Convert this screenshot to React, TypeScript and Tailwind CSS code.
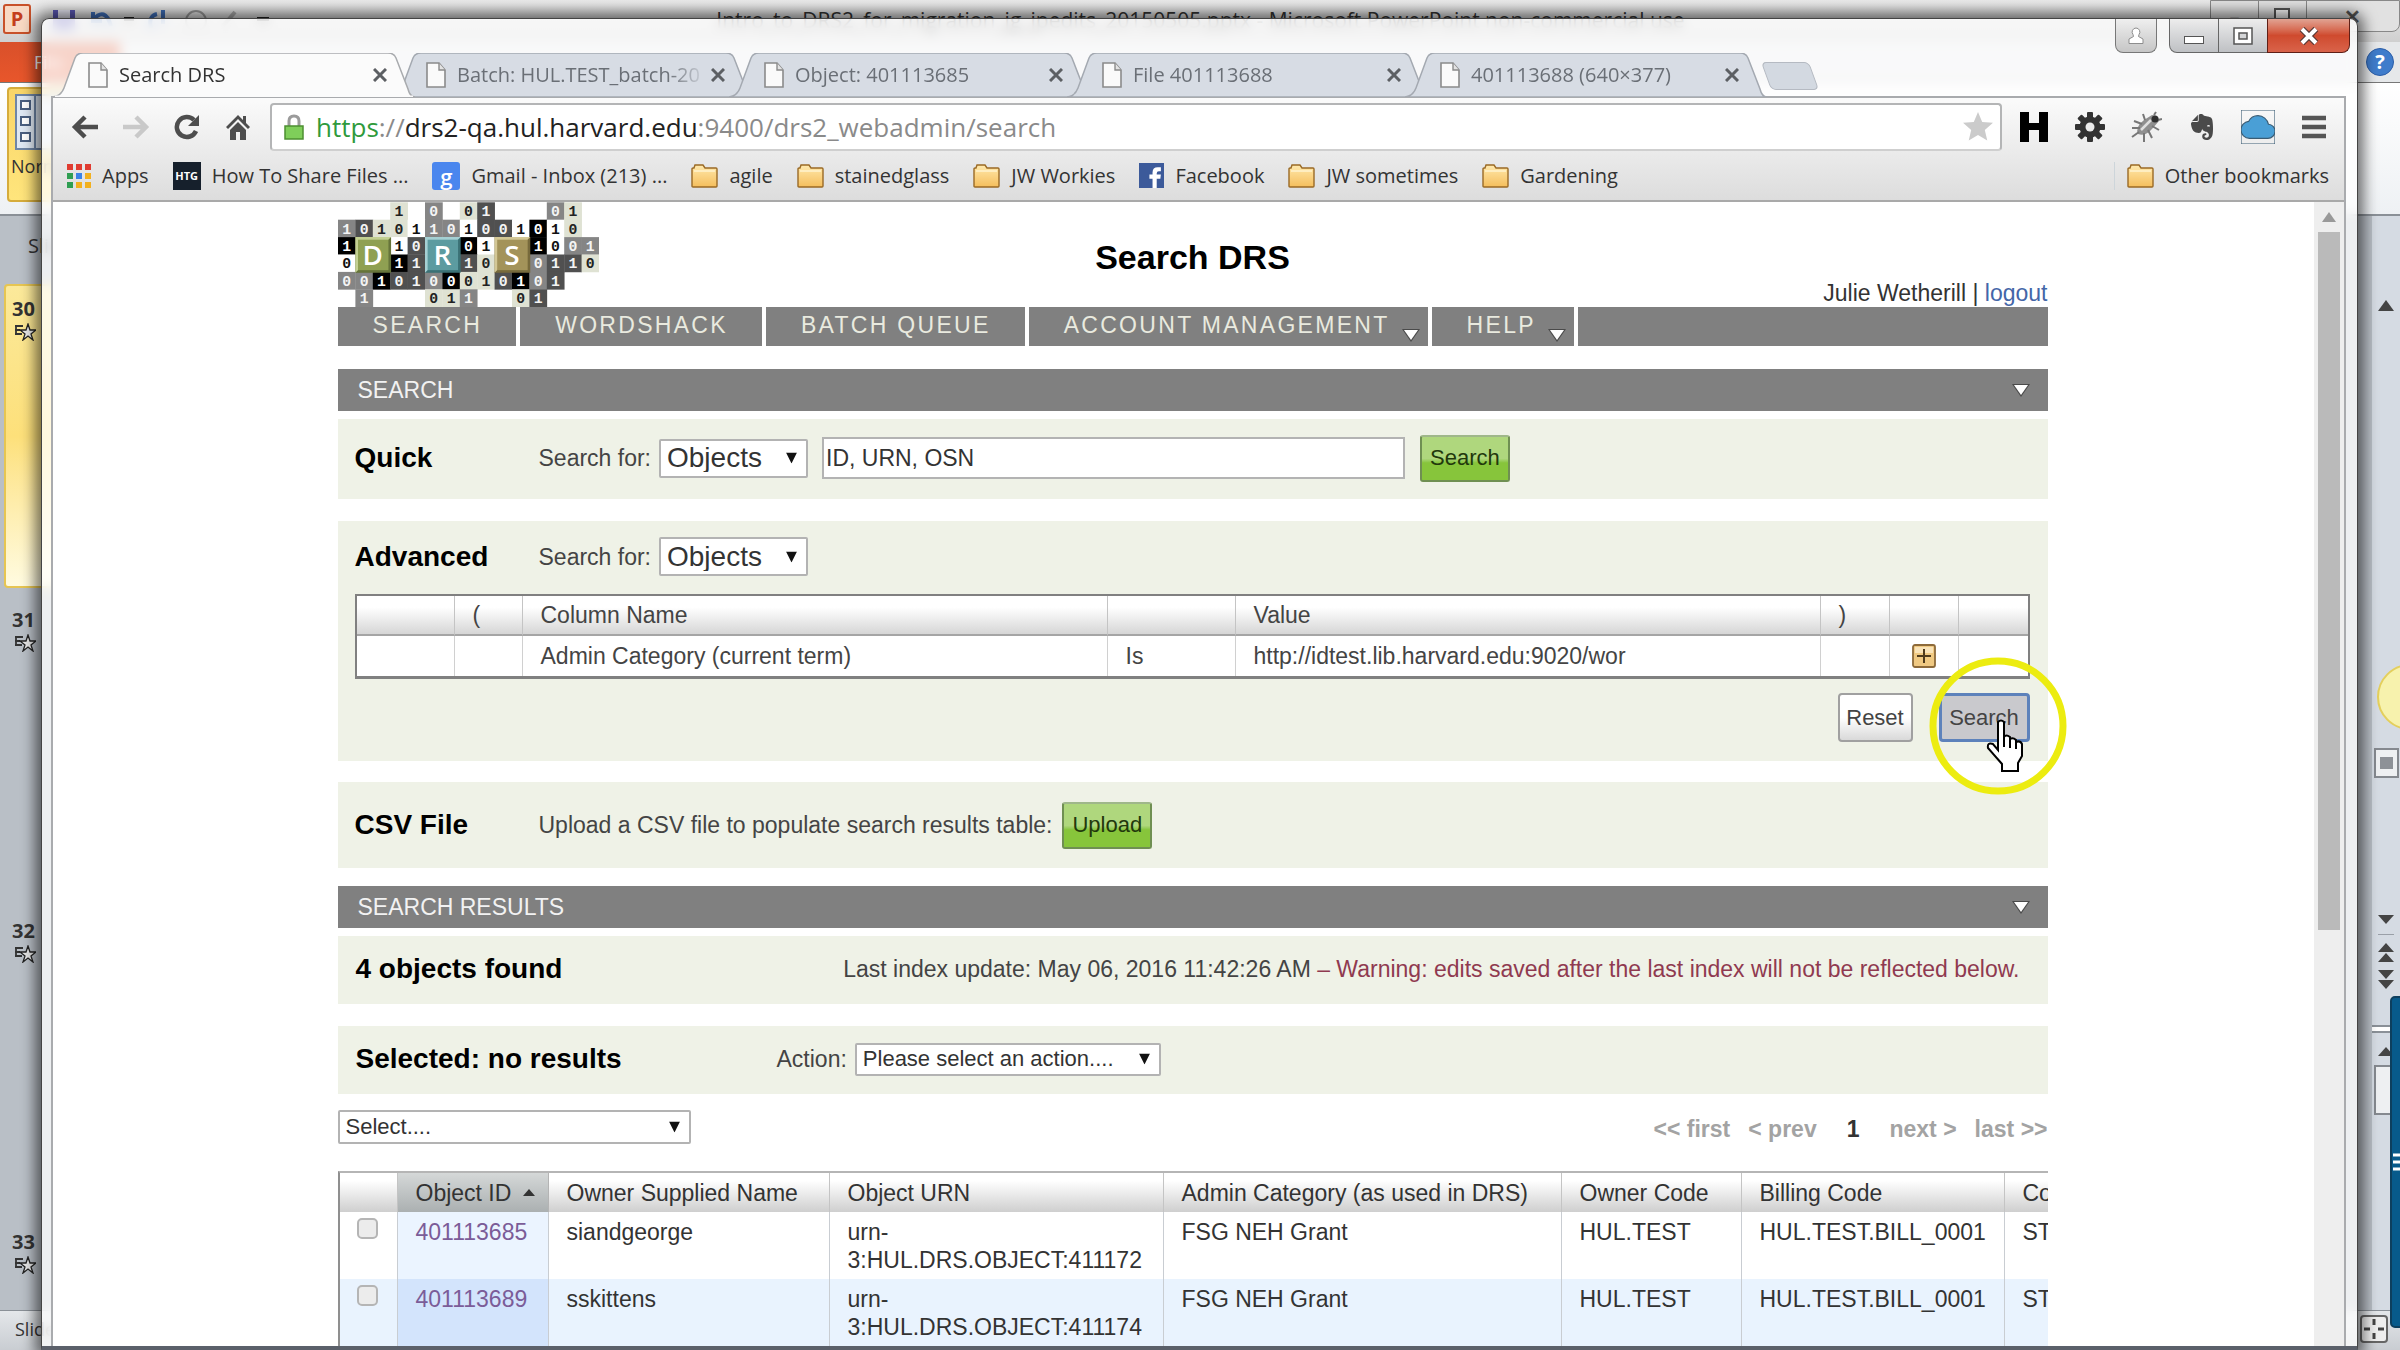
import React, { FunctionComponent, ReactNode } from "react";
import { SiEvernote } from "react-icons/si";
import { MdCloud, MdStar } from "react-icons/md";

/* ---------- small drawings ---------- */

const PageIcon = () => (
  <svg className="h-[26px] w-5 shrink-0" viewBox="0 0 20 26">
    <path d="M1 1h12l6 7v17H1z" fill="#fafafa" stroke="#8b8b8b" strokeWidth="1.6" />
    <path d="M13 1v7h6" fill="#e3e3e3" stroke="#8b8b8b" strokeWidth="1.4" />
  </svg>
);

const FolderIcon = () => (
  <svg className="h-6 w-[27px] shrink-0" viewBox="0 0 27 24">
    <defs>
      <linearGradient id="folder" x1="0" y1="0" x2="0" y2="1">
        <stop offset="0" stopColor="#ffe9ad" />
        <stop offset="1" stopColor="#f5be5c" />
      </linearGradient>
    </defs>
    <path
      d="M1 22V5q0-1 1-1h1l1-3h8l2 3h11q1 0 1 1v17q0 1-1 1H2q-1 0-1-1z"
      fill="url(#folder)"
      stroke="#9a6a25"
      strokeWidth="1.4"
    />
    <path d="M3 7h21" stroke="#fff3cf" strokeWidth="1.5" />
  </svg>
);

const AppsIcon = () => (
  <svg className="h-6 w-6 shrink-0" viewBox="0 0 24 24">
    {["#e03c31", "#e03c31", "#e03c31", "#2f9e52", "#3b82e6", "#f2b01e", "#2f9e52", "#f2b01e", "#f2b01e"].map(
      (c, i) => (
        <rect key={i} x={(i % 3) * 9} y={Math.floor(i / 3) * 9} width="6" height="6" fill={c} />
      )
    )}
  </svg>
);

const DownArrow = ({ className = "" }: { className?: string }) => (
  <svg className={`h-[11px] w-[11px] ${className}`} viewBox="0 0 10 10">
    <path d="M0 0h10L5 10z" fill="currentColor" />
  </svg>
);

const WhiteArrow = ({ className = "" }: { className?: string }) => (
  <svg className={`h-[14px] w-[18px] ${className}`} viewBox="0 0 18 14">
    <path d="M0 1h18L9 14z" fill="#4a4a4a" />
    <path d="M2 2h14L9 12z" fill="#fff" />
  </svg>
);

/* ---------- logo ---------- */

// one letter per cell: shade, then the digit
const LOGO_ROWS = [
  ".. .. .. l1 .. g0 .. l0 d1 .. .. .. g0 l1 ..",
  "g1 d0 l1 l0 w1 g1 g0 w1 d0 d0 w1 k0 w1 l0 ..",
  "k1 .. .. w1 d0 .. .. k0 w1 .. .. k1 w0 g0 g1",
  "w0 .. .. k1 d1 .. .. d1 l0 .. .. g0 d1 d1 l0",
  "g0 g0 k1 d0 d1 g0 k0 l0 l1 d0 k1 g0 d1 .. ..",
  ".. g1 .. .. .. l0 l1 g1 .. .. l0 d1 .. .. ..",
];

const SHADES: Record<string, [string, string]> = {
  l: ["#dfe2d3", "#222"],
  g: ["#858585", "#f4f4f4"],
  d: ["#505050", "#f4f4f4"],
  w: ["#ffffff", "#111"],
  k: ["#000000", "#fff"],
};

const LOGO_TILES = [
  { letter: "D", col: 1, fill: "#8fa052", light: "#c3d092", dark: "#66743a" },
  { letter: "R", col: 5, fill: "#5c9ba0", light: "#a5d0d3", dark: "#3b7175" },
  { letter: "S", col: 9, fill: "#a3935a", light: "#d3c795", dark: "#776a3c" },
];

const Logo = () => (
  <svg className="h-[105px] w-[261px]" viewBox="0 0 150 60" role="img" aria-label="DRS">
    {LOGO_ROWS.map((row, y) =>
      row.split(" ").map((cell, x) => {
        if (cell === "..") return null;
        const [bg, fg] = SHADES[cell[0]];
        return (
          <g key={`${x}-${y}`}>
            <rect x={x * 10} y={y * 10} width="10.2" height="10.2" fill={bg} />
            <text
              x={x * 10 + 5}
              y={y * 10 + 8}
              textAnchor="middle"
              fontSize="8.5"
              fontWeight="700"
              fontFamily="Liberation Mono, monospace"
              fill={fg}
            >
              {cell[1]}
            </text>
          </g>
        );
      })
    )}
    {LOGO_TILES.map(({ letter, col, fill, light, dark }) => (
      <g key={letter}>
        <rect x={col * 10} y="20" width="20.5" height="20.5" fill={dark} />
        <path d={`M${col * 10} 20h20.5l-2 2h-16.500v16.500l-2 2z`} fill={light} />
        <rect x={col * 10 + 1.5} y="21.5" width="17.5" height="17.5" fill={fill} />
        <text
          x={col * 10 + 10}
          y="36"
          textAnchor="middle"
          fontSize="16"
          fontWeight="600"
          fontFamily="Open Sans, sans-serif"
          fill="#fff"
        >
          {letter}
        </text>
      </g>
    ))}
  </svg>
);

/* ---------- browser ---------- */

interface ITab {
  title: string;
  active?: boolean;
}

const TABS: ITab[] = [
  { title: "Search DRS", active: true },
  { title: "Batch: HUL.TEST_batch-20" },
  { title: "Object: 401113685" },
  { title: "File 401113688" },
  { title: "401113688 (640×377)" },
];

const Tab: FunctionComponent<ITab> = ({ title, active }) => (
  <div
    className={`relative -mr-6 flex w-[362px] items-center pr-7 pl-[35px] ${
      active ? "z-10 text-[#333]" : "text-[#6a6f76]"
    }`}
  >
    <svg className="absolute inset-0 h-full w-full" viewBox="0 0 362 44" preserveAspectRatio="none">
      <path
        d="M0 44q8-1 11-9L22 5q2-5 8-5h305q6 0 8 5l12 31q2 8 7 8z"
        fill={active ? "#fbfbfb" : "#d7dce4"}
        stroke={active ? "#a9abae" : "#a4a9b1"}
        strokeWidth="1.5"
      />
      {active && <path d="M2 44h358" stroke="#fbfbfb" strokeWidth="3" />}
    </svg>
    <div className="relative flex min-w-0 flex-1 items-center gap-[11px]">
      <PageIcon />
      <a
        href="#"
        className="w-[250px] overflow-hidden whitespace-nowrap [mask-image:linear-gradient(to_right,black_84%,transparent)]"
      >
        {title}
      </a>
    </div>
    <button aria-label={`Close ${title}`} className="relative">
      <svg className="h-[14px] w-[14px]" viewBox="0 0 14 14">
        <path d="M1 1l12 12M13 1L1 13" stroke="#5c5f63" strokeWidth="3" />
      </svg>
    </button>
  </div>
);

const WindowButtons = () => (
  <div className="-mr-1 flex h-[34px] items-stretch">
    <button
      aria-label="Profile"
      className="mr-3 flex w-[42px] items-center justify-center rounded-b-lg border border-t-0 border-[#777] bg-linear-to-b from-[#efefef] to-[#c6c6c6]"
    >
      <svg className="h-[18px] w-[18px]" viewBox="0 0 18 18">
        <path
          d="M9 1a4 4 0 0 1 3 6.500l-.5 2 4.500 2.500v4.500H2V12l4.500-2.500-.5-2A4 4 0 0 1 9 1z"
          fill="#fff"
          stroke="#8d8d8d"
        />
      </svg>
    </button>
    <button
      aria-label="Minimize"
      className="flex w-[50px] items-center justify-center rounded-bl-lg border border-t-0 border-[#666] bg-linear-to-b from-[#ededed] via-[#d5d6d8] to-[#bfc1c4]"
    >
      <span className="mt-2 h-2 w-5 border border-[#555] bg-white" />
    </button>
    <button
      aria-label="Restore"
      className="flex w-[48px] items-center justify-center border-b border-[#666] bg-linear-to-b from-[#ededed] via-[#d5d6d8] to-[#bfc1c4]"
    >
      <svg className="h-[18px] w-5" viewBox="0 0 20 18">
        <rect x="1" y="1" width="18" height="16" fill="#fff" stroke="#555" strokeWidth="1.5" />
        <rect x="6" y="6" width="8" height="6" fill="#d5d6d8" stroke="#555" strokeWidth="1.5" />
      </svg>
    </button>
    <button
      aria-label="Close window"
      className="flex w-[83px] items-center justify-center rounded-br-lg border border-t-0 border-[#5f1f16] bg-linear-to-b from-[#e0a393] via-[#cf4a2e] to-[#d9634a]"
    >
      <svg className="h-[18px] w-[20px]" viewBox="0 0 20 18">
        <path d="M3 2l14 14M17 2L3 16" stroke="#5a3a36" strokeWidth="6.5" />
        <path d="M3 2l14 14M17 2L3 16" stroke="#fff" strokeWidth="4" />
      </svg>
    </button>
  </div>
);

const ToolButton = ({ label, children }: { label: string; children: ReactNode }) => (
  <button aria-label={label} className="flex w-8 shrink-0 items-center justify-center">
    {children}
  </button>
);

const Toolbar = () => (
  <div className="flex items-center pt-[5px] pr-[14px] pl-4">
    <div className="flex gap-[19px]">
      <ToolButton label="Back">
        <svg className="h-6 w-7" viewBox="0 0 28 24">
          <path d="M27 12H5M14 2L4 12l10 10" fill="none" stroke="#4d4d4d" strokeWidth="4.5" />
        </svg>
      </ToolButton>
      <ToolButton label="Forward">
        <svg className="h-6 w-7" viewBox="0 0 28 24">
          <path d="M1 12h22M14 2l10 10-10 10" fill="none" stroke="#c9c9c9" strokeWidth="4.5" />
        </svg>
      </ToolButton>
      <ToolButton label="Reload">
        <svg className="h-[26px] w-7" viewBox="0 0 28 26">
          <path d="M23 17a10 10 0 1 1-2-11" fill="none" stroke="#4d4d4d" strokeWidth="4.5" />
          <path d="M26 1v11H15z" fill="#4d4d4d" />
        </svg>
      </ToolButton>
      <ToolButton label="Home">
        <svg className="h-[26px] w-6" viewBox="0 0 24 26">
          <path d="M12 1L0 13l2 2L12 5l10 10 2-2-4-4V2h-3v4z" fill="#4d4d4d" />
          <path d="M12 8l-8 8v10h6v-8h4v8h6V16z" fill="#4d4d4d" />
        </svg>
      </ToolButton>
    </div>

    <div className="ml-4 flex h-12 flex-1 items-center rounded-[4px] border-2 border-[#b4b5b6] border-b-[#cfcfcf] bg-white px-3">
      <svg className="mr-3 h-[26px] w-5 shrink-0" viewBox="0 0 20 26">
        <path d="M5 13V7q0-5 5-5t5 5v6" fill="none" stroke="#9b9b9b" strokeWidth="3" />
        <rect x="1" y="12" width="18" height="13" fill="#7fce5a" stroke="#4c8f31" strokeWidth="1.5" />
      </svg>
      <div className="flex-1 text-[26px] leading-8 text-[#8a8a8a]">
        <span className="text-[#2f9a3c]">https</span>://<span className="text-[#222]">drs2-qa.hul.harvard.edu</span>
        :9400/drs2_webadmin/search
      </div>
      <MdStar className="-mr-2 h-9 w-9 text-[#cbcbcb]" />
    </div>

    <div className="ml-4 flex gap-6">
      <ToolButton label="H extension">
        <svg className="h-[30px] w-7" viewBox="0 0 28 30">
          <path d="M0 0h9v11h10V0h9v30h-9V18H9v12H0z" fill="#000" />
        </svg>
      </ToolButton>
      <ToolButton label="Settings">
        <svg className="h-[30px] w-[30px]" viewBox="0 0 30 30">
          {[0, 45, 90, 135].map((a) => (
            <rect key={a} x="12" y="0" width="6" height="30" rx="1" fill="#333" transform={`rotate(${a} 15 15)`} />
          ))}
          <circle cx="15" cy="15" r="10.5" fill="#333" />
          <circle cx="15" cy="15" r="4.5" fill="#ececec" />
        </svg>
      </ToolButton>
      <ToolButton label="Bug">
        <svg className="h-8 w-8" viewBox="0 0 32 32">
          <path d="M8 23Q5 16 14 9l8-5q7 0 7 6l-7 8q-7 8-14 5z" fill="#8f8f8f" />
          <path
            d="M12 13L4 10M10 17H2M9 21l-7 5M14 22v9M18 19l4 8M22 15l7 4M15 9l-2-6M24 4l2-3M28 9l4-1"
            stroke="#777"
            strokeWidth="2"
          />
          <path d="M11 19l10-10" stroke="#dedede" strokeWidth="2.5" />
          <circle cx="25" cy="8" r="3.5" fill="#2f2f2f" />
        </svg>
      </ToolButton>
      <ToolButton label="Evernote">
        <SiEvernote className="h-[26px] w-[26px] text-[#4a4a4a]" />
      </ToolButton>
      <ToolButton label="Cloud">
        <MdCloud className="h-[34px] w-[34px] shrink-0 text-[#4a9fd6]" stroke="#3a5c74" strokeWidth="0.8" />
      </ToolButton>
      <ToolButton label="Menu">
        <svg className="h-6 w-6" viewBox="0 0 24 24">
          <path d="M0 3h24M0 12h24M0 21h24" stroke="#555" strokeWidth="4.5" />
        </svg>
      </ToolButton>
    </div>
  </div>
);

interface IBookmark {
  text: string;
  icon?: ReactNode;
}

const BOOKMARKS: IBookmark[] = [
  { text: "Apps", icon: <AppsIcon /> },
  {
    text: "How To Share Files ...",
    icon: (
      <span className="flex h-7 w-7 items-center justify-center bg-[#16202c] text-[11px] font-bold text-white">
        HTG
      </span>
    ),
  },
  {
    text: "Gmail - Inbox (213) ...",
    icon: (
      <span className="flex h-7 w-7 items-center justify-center rounded-[3px] bg-[#4a86ee] text-[22px] leading-none font-semibold text-white">
        g
      </span>
    ),
  },
  { text: "agile" },
  { text: "stainedglass" },
  { text: "JW Workies" },
  {
    text: "Facebook",
    icon: (
      <svg className="h-[25px] w-[25px]" viewBox="0 0 24 24">
        <rect width="24" height="24" fill="#3c5a9a" />
        <path d="M13 24v-9h-3v-4h3V9q0-5 5-5h3v4h-2q-2 0-2 2v1h4l-.5 4H17v9z" fill="#fff" />
      </svg>
    ),
  },
  { text: "JW sometimes" },
  { text: "Gardening" },
];

const BookmarkLink: FunctionComponent<IBookmark> = ({ text, icon }) => (
  <a href="#" className="flex items-center gap-[11px] whitespace-nowrap">
    {icon ?? <FolderIcon />}
    <span>{text}</span>
  </a>
);

const BookmarksBar = () => (
  <div className="flex h-[51px] items-center justify-between border-b-2 border-[#a9a9a9] pr-[15px] pl-[14px] text-xl text-[#333]">
    <div className="flex items-center gap-6">
      {BOOKMARKS.map((b) => (
        <BookmarkLink key={b.text} {...b} />
      ))}
    </div>
    <div className="border-l border-[#cdd5da] pl-3">
      <BookmarkLink text="Other bookmarks" />
    </div>
  </div>
);

/* ---------- page ---------- */

interface ISelectProps {
  id: string;
  value: string;
  label?: string;
  className?: string;
}

const Select: FunctionComponent<ISelectProps> = ({ id, label, value, className = "" }) => (
  <div className="flex items-center gap-2">
    {label && (
      <label htmlFor={id} className="text-[#444]">
        {label}
      </label>
    )}
    <div className="relative">
      <select
        id={id}
        aria-label={label ? undefined : "Select columns"}
        className={`block appearance-none rounded-[2px] border-2 border-[#b3b3b3] bg-white px-[6px] text-[#333] ${className}`}
      >
        <option>{value}</option>
      </select>
      <DownArrow className="pointer-events-none absolute top-1/2 right-[11px] -translate-y-1/2 text-[#111]" />
    </div>
  </div>
);

const GreenButton = ({ children }: { children: ReactNode }) => (
  <button className="h-[47px] rounded-[3px] border-2 border-[#6f8f52] border-t-[#9fb78a] bg-linear-to-b from-[#afd77d] from-50% to-[#87c53b] to-60% px-2 text-[22px] text-[#22380c]">
    {children}
  </button>
);

const NAV = [
  { text: "SEARCH" },
  { text: "WORDSHACK" },
  { text: "BATCH QUEUE" },
  { text: "ACCOUNT MANAGEMENT", menu: true },
  { text: "HELP", menu: true },
];

const NavBar = () => (
  <nav className="flex h-[39px] gap-1 tracking-widest text-[#e9eadf]">
    {NAV.map(({ text, menu }) => (
      <a key={text} href="#" className="flex bg-[#808080] pl-[35px] leading-9">
        {text}
        {menu ? <WhiteArrow className="mt-[21px] mr-2 ml-3" /> : <span className="w-[34px]" />}
      </a>
    ))}
    <div className="flex-1 bg-[#808080]" />
  </nav>
);

const SectionBar = ({ children }: { children: ReactNode }) => (
  <div className="flex h-[42px] items-center justify-between bg-[#808080] pr-[18px] pb-px pl-5 text-[#f2f2f2]">
    <h2>{children}</h2>
    <button aria-label="Collapse">
      <WhiteArrow />
    </button>
  </div>
);

const QUERY_HEAD = "border-r border-[#c4c4c4] bg-linear-to-b from-white from-30% to-[#d6d6d6] px-[18px] text-left font-normal last:border-r-0";
const QUERY_CELL = "border-r border-[#d0d0d0] bg-white px-[18px] last:border-r-0";

const QueryTable = () => (
  <table className="w-full table-fixed border-separate border-spacing-0 border-2 border-b-[3px] border-[#808080] text-[#444]">
    <colgroup>
      <col className="w-[98px]" />
      <col className="w-[68px]" />
      <col />
      <col className="w-[128px]" />
      <col />
      <col className="w-[69px]" />
      <col className="w-[69px]" />
      <col className="w-[69px]" />
    </colgroup>
    <thead>
      <tr className="h-10">
        {["", "(", "Column Name", "", "Value", ")", "", ""].map((h, i) => (
          <th key={i} className={`${QUERY_HEAD} border-b-2 border-b-[#a5a5a5]`}>
            {h}
          </th>
        ))}
      </tr>
    </thead>
    <tbody>
      <tr className="h-10">
        <td className={QUERY_CELL} />
        <td className={QUERY_CELL} />
        <td className={QUERY_CELL}>Admin Category (current term)</td>
        <td className={QUERY_CELL}>Is</td>
        <td className={QUERY_CELL}>http://idtest.lib.harvard.edu:9020/wor</td>
        <td className={QUERY_CELL} />
        <td className="border-r border-[#d0d0d0] bg-white">
          <button aria-label="Add row" className="mx-auto block">
            <svg className="h-6 w-6" viewBox="0 0 24 24">
              <rect x="1" y="1" width="22" height="22" rx="2" fill="#f0c982" stroke="#8d6a3a" strokeWidth="1.8" />
              <path d="M3 3h18v6H3z" fill="#f9e3b8" />
              <path d="M12 5v14M5 12h14" stroke="#4e3a1c" strokeWidth="2" />
            </svg>
          </button>
        </td>
        <td className={QUERY_CELL} />
      </tr>
    </tbody>
  </table>
);

const ROWS = [
  { id: "401113685", name: "siandgeorge", urn: "3:HUL.DRS.OBJECT:411172" },
  { id: "401113689", name: "sskittens", urn: "3:HUL.DRS.OBJECT:411174" },
];

const HEADINGS = ["Owner Supplied Name", "Object URN", "Admin Category (as used in DRS)", "Owner Code", "Billing Code", "Co"];

const ResultsTable = () => (
  <div className="overflow-hidden border-t-2 border-l-2 border-[#b5b5b5] border-l-[#8f8f8f]">
    <table className="w-full table-fixed border-separate border-spacing-0 leading-7 whitespace-nowrap text-[#333]">
      <colgroup>
        <col className="w-[58px]" />
        <col className="w-[151px]" />
        <col className="w-[281px]" />
        <col className="w-[334px]" />
        <col className="w-[398px]" />
        <col className="w-[180px]" />
        <col className="w-[263px]" />
        <col />
      </colgroup>
      <thead>
        <tr className="h-[39px] bg-linear-to-b from-white from-20% to-[#cfcfcf] text-left">
          <th className="border-r border-[#c4c4c4]" />
          <th className="border-r border-[#b4b4b4] bg-linear-to-b from-[#d5d8d8] to-[#abb0b1] pl-[18px] text-left font-normal">
            <button className="flex items-center gap-3">
              Object ID
              <svg className="h-2 w-3" viewBox="0 0 12 8">
                <path d="M6 0l6 7H0z" fill="#333" />
              </svg>
            </button>
          </th>
          {HEADINGS.map((h) => (
            <th key={h} className="border-r border-[#c4c4c4] pl-[18px] font-normal last:border-r-0">
              {h}
            </th>
          ))}
        </tr>
      </thead>
      <tbody className="align-top">
        {ROWS.map(({ id, name, urn }) => (
          <tr
            key={id}
            className="group h-[67px] even:bg-[#e9f3fe] [&>td]:border-r [&>td]:border-[#c9cdd2] [&>td]:pt-[6px] [&>td]:pl-[18px] [&>td:last-child]:border-r-0"
          >
            <td>
              <input
                type="checkbox"
                aria-label={`Select ${id}`}
                className="-ml-px block h-[21px] w-[21px] appearance-none rounded-[5px] border-2 border-[#b5b5b5] bg-[#ececec]"
              />
            </td>
            <td className="bg-[#ebf4ff] group-even:bg-[#d3e4fc]">
              <a href="#" className="text-[#7b5c98]">
                {id}
              </a>
            </td>
            <td>{name}</td>
            <td>
              urn-
              <br />
              {urn}
            </td>
            <td>FSG NEH Grant</td>
            <td>HUL.TEST</td>
            <td>HUL.TEST.BILL_0001</td>
            <td>ST</td>
          </tr>
        ))}
      </tbody>
    </table>
  </div>
);

const SearchPage = () => (
  <main className="mx-auto w-full max-w-[1710px] font-['Liberation_Sans',Arial,sans-serif] text-[23px] leading-7">
    <header className="grid grid-cols-[1fr_auto_1fr]">
      <Logo />
      <h1 className="self-center pt-1 text-[34px] leading-10 font-bold">Search DRS</h1>
      <p className="self-end justify-self-end text-[#333]">
        Julie Wetherill |{" "}
        <a href="#" className="text-[#4466a8]">
          logout
        </a>
      </p>
    </header>
    <NavBar />

    <section className="mt-[23px]">
      <SectionBar>SEARCH</SectionBar>

      <form className="mt-2 flex h-20 items-center bg-[#eff2e7] pb-[2px] pl-[17px]">
        <h3 className="w-[184px] text-[28px] font-bold">Quick</h3>
        <Select id="quick-type" label="Search for:" value="Objects" className="h-[39px] w-[149px] text-[28px]" />
        <input
          type="text"
          aria-label="Quick search"
          defaultValue="ID, URN, OSN"
          className="mr-[15px] ml-[14px] h-[42px] w-[583px] border-2 border-[#b3b3b3] bg-white px-[2px] text-[#333]"
        />
        <GreenButton>Search</GreenButton>
      </form>

      <form className="mt-[22px] bg-[#eff2e7] pt-4 pr-[18px] pb-[19px] pl-[17px]">
        <div className="flex items-center">
          <h3 className="w-[184px] text-[28px] font-bold">Advanced</h3>
          <Select id="advanced-type" label="Search for:" value="Objects" className="h-[39px] w-[149px] text-[28px]" />
        </div>
        <div className="mt-[18px]">
          <QueryTable />
        </div>
        <div className="mt-[14px] flex justify-end gap-[26px]">
          <button
            type="reset"
            className="h-[49px] w-[75px] rounded-[4px] border-2 border-[#a0a0a0] bg-linear-to-b from-white from-50% to-[#d9d9d9] text-[22px] text-[#444]"
          >
            Reset
          </button>
          <div className="relative">
            <button
              type="button"
              className="h-[49px] w-[91px] rounded-[4px] border-[3px] border-[#5d82bb] bg-[#c9c9cd] text-[22px] text-[#444]"
            >
              Search
            </button>
            {/* pointer with its click highlight */}
            <svg
              className="pointer-events-none absolute top-[-38px] left-[-12px] h-[142px] w-[142px]"
              viewBox="0 0 142 142"
            >
              <circle cx="71" cy="71" r="65" fill="none" stroke="#ecec10" strokeWidth="7" />
              <g transform="translate(-1 -4)">
                <path
                  d="M72 71q3-3 6 0v15q2-3 6 0v2q3-2 6 1v2q4-2 6 2v12l-4 7v8H76v-7L62 97q-1-6 5-4l5 6z"
                  fill="#fff"
                  stroke="#000"
                  strokeWidth="2"
                />
                <path d="M78 86v10M84 88v9M90 91v7" stroke="#000" strokeWidth="2" />
              </g>
            </svg>
          </div>
        </div>
      </form>

      <form className="mt-[21px] flex h-[86px] items-center bg-[#eff2e7] pl-[17px]">
        <h3 className="w-[184px] text-[28px] font-bold">CSV File</h3>
        <p className="mr-[10px] text-[#444]">Upload a CSV file to populate search results table:</p>
        <GreenButton>Upload</GreenButton>
      </form>
    </section>

    <section className="mt-[18px]">
      <SectionBar>SEARCH RESULTS</SectionBar>
      <div className="mt-2 flex h-[68px] items-center justify-between bg-[#eff2e7] pr-7 pb-[2px] pl-[18px]">
        <h3 className="text-[28px] font-bold">4 objects found</h3>
        <p className="text-[#444]">
          Last index update: May 06, 2016 11:42:26 AM{" "}
          <span className="text-[#8f3a50]">
            – Warning: edits saved after the last index will not be reflected below.
          </span>
        </p>
      </div>
      <div className="mt-[22px] flex h-[68px] items-center bg-[#eff2e7] pb-[2px] pl-[18px]">
        <h3 className="w-[421px] text-[28px] font-bold">Selected: no results</h3>
        <Select id="action" label="Action:" value="Please select an action...." className="h-[33px] w-[306px] text-[22px]" />
      </div>
      <div className="mt-4 flex items-center justify-between">
        <Select id="columns" value="Select...." className="h-[34px] w-[353px] text-[22px]" />
        <div className="flex gap-[18px] pt-1 font-bold text-[#a3a3a3]">
          <a href="#">&lt;&lt; first</a>
          <a href="#">&lt; prev</a>
          <span className="px-3 text-[#333]">1</span>
          <a href="#">next &gt;</a>
          <a href="#">last &gt;&gt;</a>
        </div>
      </div>
      <div className="mt-[27px]">
        <ResultsTable />
      </div>
    </section>
  </main>
);

const Browser = () => (
  <div className="absolute top-[18px] right-[42px] bottom-0 left-[41px] flex flex-col rounded-t-lg border border-b-4 border-[#444] border-b-[#5b606a] bg-white/75 pr-[11px] pl-[9px] shadow-[0_0_14px_6px_rgba(0,0,0,0.55)] backdrop-blur-[6px]">
    <div className="flex h-[34px] justify-end">
      <WindowButtons />
    </div>
    <div className="-mb-px flex h-[44px] pl-[2px] text-xl">
      {TABS.map((t) => (
        <Tab key={t.title} {...t} />
      ))}
      <button
        aria-label="New tab"
        className="mt-[9px] ml-[23px] h-7 w-[48px] skew-x-[20deg] rounded-[5px] border border-[#b5bac2] bg-[#d3d9e1]"
      />
    </div>
    <div className="flex min-h-0 flex-1 flex-col border-2 border-b-0 border-[#a9abae] bg-white">
      <div className="bg-linear-to-b from-[#fbfbfb] to-[#dcdcdc]">
        <Toolbar />
        <BookmarksBar />
      </div>
      <div className="flex min-h-0 flex-1">
        <div className="min-w-0 flex-1 overflow-hidden pl-[18px]">
          <SearchPage />
        </div>
        <div className="flex w-[30px] flex-col items-center bg-[#eee]">
          <svg className="my-[10px] h-[10px] w-[14px] shrink-0" viewBox="0 0 14 10">
            <path d="M7 0l7 10H0z" fill="#999" />
          </svg>
          <div className="h-[61%] w-[22px] bg-[#bababa]" />
        </div>
      </div>
    </div>
  </div>
);

/* ---------- presentation window behind the browser ---------- */

const SlideMark = () => (
  <svg className="ml-[3px] h-[18px] w-[21px]" viewBox="0 0 21 18">
    <path d="M0 3h8M0 7h5M0 11h7M1 3v9" stroke="#333" strokeWidth="1.8" />
    <path d="M13 1l2 6h6l-5 4 2 6-5-4-5 4 2-6-5-4h6z" fill="#e8e8e8" stroke="#222" strokeWidth="1.3" />
  </svg>
);

const ScrollMark = ({ d }: { d: string }) => (
  <svg className="h-5 w-4" viewBox="0 0 16 20">
    <path d={d} fill="#444" />
  </svg>
);

const Presentation = () => (
  <div className="flex h-full flex-col bg-[#b9bfc6] text-[#333]">
    <div className="flex h-[42px] justify-between bg-linear-to-b from-[#ececec] to-[#cfcfcf]">
      <div className="flex items-start gap-5 pt-1 pl-[3px]">
        <span className="flex h-[30px] w-7 items-center justify-center rounded-[3px] border-2 border-[#c8512a] bg-[#f8d9c4] text-xl font-bold text-[#c43e1c]">
          P
        </span>
        <svg className="mt-1 h-[22px] w-[220px]" viewBox="0 0 220 22">
          <path d="M2 2h22v20H2z" fill="#5c59b5" />
          <path d="M7 2h12v8H7z" fill="#e8e8f4" />
          <path d="M42 12q12-14 18 6M42 4v9h9" fill="none" stroke="#3f6fb8" strokeWidth="4" />
          <path d="M73 11h10M218 11h-12" stroke="#222" strokeWidth="4" />
          <path d="M100 20q-3-12 6-14M112 2v14" fill="none" stroke="#3f6fb8" strokeWidth="4" />
          <circle cx="145" cy="13" r="10" fill="none" stroke="#999" strokeWidth="2" />
          <path d="M172 18l12-14" stroke="#aaa" strokeWidth="4" />
        </svg>
      </div>
      <p className="mr-20 pt-2 text-[21px] leading-6 whitespace-nowrap">
        Intro_to_DRS2_for_migration_jg_jpedits_20150505.pptx - Microsoft PowerPoint non-commercial use
      </p>
      <div className="flex h-8 w-[190px] rounded-b-lg border border-[#888] bg-[#e1e1e1] text-xl leading-8 font-bold text-[#555]">
        <span className="w-12 border-r border-[#888] text-center">–</span>
        <span className="flex w-12 items-center justify-center border-r border-[#888]">
          <span className="h-4 w-4 border-2 border-[#555] bg-white" />
        </span>
        <span className="flex-1 text-center">✕</span>
      </div>
    </div>
    <div className="flex h-[41px] items-center justify-between border-b border-[#777] bg-[#e6e8ea]">
      <span className="flex h-full w-[120px] items-center bg-linear-to-b from-[#d9502a] to-[#e8562b] pl-[34px] text-lg text-white">
        File
      </span>
      <span className="mr-[6px] flex h-7 w-7 items-center justify-center rounded-full border border-[#2c5ea8] bg-[#3f7ccb] text-xl font-bold text-white">
        ?
      </span>
    </div>
    <div className="flex h-[133px] border-b-2 border-[#8a9097] bg-linear-to-b from-white to-[#eef1f4] pt-1 pb-3 pl-[7px]">
      <div className="flex w-[90px] flex-col justify-between rounded-[4px] border-2 border-[#d6ac3c] bg-linear-to-b from-[#f9d568] to-[#ffe57c] pt-1 pb-6 pl-[2px]">
        <svg className="h-[58px] w-[60px]" viewBox="0 0 60 58">
          <rect x="5" y="2" width="55" height="54" fill="#dfe8f3" stroke="#6f86a6" strokeWidth="2" />
          <path d="M24 2v54" stroke="#6f86a6" strokeWidth="2" />
          <path d="M10 8h9v8h-9zM10 24h9v8h-9zM10 40h9v8h-9z" fill="#fff" stroke="#4a5f80" strokeWidth="2" />
        </svg>
        <span className="text-lg leading-5">Normal</span>
      </div>
    </div>
    <div className="flex min-h-0 flex-1 justify-between">
      <div className="w-[200px] overflow-hidden">
        <p className="pt-5 pl-7 text-xl leading-5">Slides</p>
        <div className="mt-7 ml-1">
          {["30", "31", "32", "33"].map((n, i) => (
            <div
              key={n}
              className={`mb-[7px] h-[304px] rounded-l-[4px] pt-[9px] pl-[6px] text-xl leading-7 font-bold ${
                i === 0 ? "border-2 border-[#e6c552] bg-linear-to-b from-[#fbe99a] via-[#fde07a] to-[#fffbe0]" : "border-2 border-transparent"
              }`}
            >
              {n}
              <SlideMark />
            </div>
          ))}
        </div>
      </div>
      <div className="flex w-[28px] flex-col items-center overflow-hidden bg-[#d5dbe3] pt-[80px]">
        <ScrollMark d="M8 4l8 11H0z" />
        <div className="mt-[348px] h-[66px] w-[66px] shrink-0 translate-x-6 rounded-full border-2 border-[#e4cf5c] bg-[#f7f2ad]" />
        <div className="mt-[18px] flex h-[30px] w-[25px] shrink-0 items-center justify-center border-2 border-[#85898f] bg-[#eef0f2]">
          <span className="h-3 w-[13px] bg-[#8d9197]" />
        </div>
        <div className="mt-[132px] border-b border-[#9aa0a8] pb-1">
          <ScrollMark d="M0 5h16l-8 9z" />
        </div>
        <div className="my-2 flex flex-col gap-[6px]">
          <ScrollMark d="M8 0l8 9H0zM8 10l8 9H0z" />
          <ScrollMark d="M0 1h16l-8 9zM0 11h16l-8 9z" />
        </div>
        <div className="mt-7 w-full border-t-2 border-b-2 border-[#8a9097] bg-white pt-1" />
        <div className="mt-3">
          <ScrollMark d="M8 2l8 9H0z" />
        </div>
        <div className="h-[50px] w-[25px] shrink-0 border-2 border-[#85898f] bg-[#eef0f2]" />
      </div>
    </div>
    <div className="flex h-10 shrink-0 items-start justify-between border-t border-[#8a9097] bg-linear-to-b from-[#e4e7ea] to-[#c9cdd2] pt-1 pr-3 pl-[15px] text-lg">
      <span>Slide 30</span>
      <svg className="h-7 w-7" viewBox="0 0 28 28">
        <rect x="1" y="1" width="26" height="26" rx="3" fill="#eee" stroke="#666" strokeWidth="2" />
        <path d="M14 4v6M14 24v-6M4 14h6M24 14h-6" stroke="#444" strokeWidth="3" />
      </svg>
    </div>
  </div>
);

export default function App() {
  return (
    <div className="relative h-screen min-h-[900px] overflow-hidden bg-[#5b606a] font-['Open_Sans','Noto_Sans',sans-serif]">
      <Presentation />
      <Browser />
      {/* docked side panel handle */}
      <div className="absolute right-[-10px] bottom-[22px] flex h-[332px] w-5 items-center rounded-[5px] border-2 border-[#0d3f5e] bg-[#075a8b] pl-px text-white">
        <svg className="h-5 w-2" viewBox="0 0 8 20">
          <path d="M0 3h8M0 10h8M0 17h8" stroke="#fff" strokeWidth="3" />
        </svg>
      </div>
    </div>
  );
}
